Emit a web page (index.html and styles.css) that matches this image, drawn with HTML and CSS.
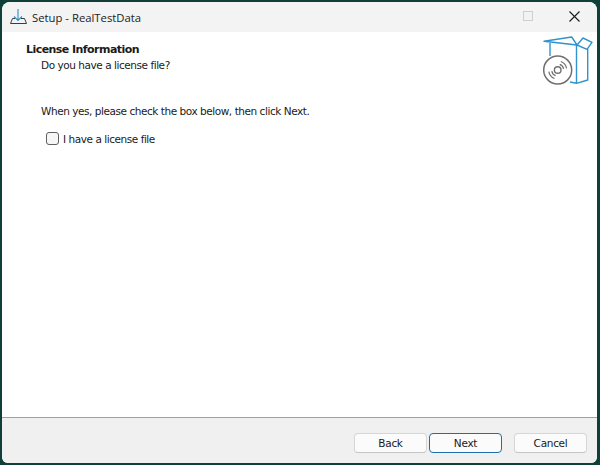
FILE: index.html
```html
<!DOCTYPE html>
<html lang="en">
<head>
<meta charset="utf-8">
<title>Setup - RealTestData</title>
<link rel="stylesheet" href="styles.css">
</head>
<body>
<div class="window">
  <header class="titlebar">
    <svg class="app-icon" width="17" height="16" viewBox="0 0 17 16" fill="none">
      <path d="M8 0v11.500M4 7.500l4 4 4-4" stroke="#2a8fc9" stroke-width="1.100"/>
      <path d="M5 9.500H2.500L.5 14.500H16.500L14.500 9.500H11" stroke="#3c3c3c" stroke-width="1"/>
    </svg>
    <span class="title">Setup - RealTestData</span>
    <div class="controls">
      <span class="maximize"></span>
      <svg class="close" width="11" height="11" viewBox="0 0 11 11"><path d="M.5.5l10 10M10.500.5l-10 10" stroke="#1a1a1a" stroke-width="1.100"/></svg>
    </div>
  </header>
  <main class="content">
    <section class="head">
      <div>
        <h1>License Information</h1>
        <p class="sub">Do you have a license file?</p>
      </div>
      <svg class="box-icon" width="50" height="50" viewBox="0 0 50 50" fill="none">
        <g stroke="#2f93cc" stroke-width="1.400" stroke-linejoin="round">
          <path d="M1 5.300L28.700 1L34 9Z"/>
          <path d="M34 9L40 2L49 6.300L44 13.300Z"/>
          <path d="M7 7V20"/>
          <path d="M33.500 9V47.300L27 46"/>
          <path d="M33.500 47.300L44.700 44V13"/>
        </g>
        <circle cx="14.700" cy="34" r="14" fill="#fff" stroke="#707070" stroke-width="1.500"/>
        <circle cx="14.700" cy="34" r="3.300" stroke="#707070" stroke-width="1.400"/>
        <g stroke="#707070" stroke-width="1.200">
          <path d="M16.750 28.360A6 6 0 0 1 20.600 32.960M17.800 25.500A9 9 0 0 1 23.560 32.440"/>
          <path d="M12.650 39.640A6 6 0 0 1 8.800 35.040M11.600 42.500A9 9 0 0 1 5.840 35.560"/>
        </g>
      </svg>
    </section>
    <p class="prompt">When yes, please check the box below, then click Next.</p>
    <label class="check"><span class="checkbox"></span><span class="check-label">I have a license file</span></label>
  </main>
  <footer class="footer">
    <button class="btn">Back</button>
    <button class="btn primary">Next</button>
    <button class="btn cancel">Cancel</button>
  </footer>
</div>
</body>
</html>
```
FILE: styles.css
```css
* { box-sizing: border-box; }
html, body { margin: 0; height: 100%; }
body {
  background: #0f3f38;
  padding: 2px 3px 2px 2px;
  overflow: hidden;
}
.window {
  height: 461px;
  display: flex;
  flex-direction: column;
  background: #fff;
  border-radius: 8px 8px 6px 6px;
  overflow: hidden;
  font-family: "DejaVu Sans", sans-serif;
  color: #1a1a1a;
}
.titlebar {
  height: 30px;
  flex: none;
  background: #f3f3f3;
  display: flex;
  align-items: center;
  padding-left: 8px;
}
.app-icon { flex: none; margin-right: 5px; }
.title { font: 11.3px "Open Sans", sans-serif; color: #222; }
.controls { margin-left: auto; display: flex; align-items: center; margin-top: -2px; }
.maximize {
  width: 10px; height: 10px;
  border: 1px solid #cfcfcf;
  margin-right: 36px;
}
.close { margin-right: 17px; }
.content { flex: 1; padding: 0 24px; }
.head { display: flex; justify-content: space-between; height: 65px; }
.head h1 { margin: 11px 0 0; font: 700 11px/13px "DejaVu Sans", sans-serif; letter-spacing: -0.55px; }
.sub { margin: 3px 0 0 15px; font: 10.5px/13px "DejaVu Sans", sans-serif; letter-spacing: -0.45px; }
.box-icon { margin: 4px -20px 0 0; flex: none; }
.prompt { margin: 8px 0 0 15px; font: 10.5px/13px "DejaVu Sans", sans-serif; letter-spacing: -0.45px; }
.check { display: flex; align-items: center; margin: 14px 0 0 20px; font: 10.5px/13px "DejaVu Sans", sans-serif; letter-spacing: -0.45px; }
.check-label { position: relative; top: 1px; }
.checkbox {
  width: 13px; height: 13px;
  background: #f6f6f6;
  border: 1px solid #5f5f5f;
  border-radius: 3px;
  margin-right: 4px;
}
.footer {
  height: 46px;
  flex: none;
  background: #f0f0f0;
  border-top: 1px solid #a0a0a0;
  display: flex;
  align-items: flex-start;
  padding: 15px 0 0 352px;
}
.btn {
  width: 73px; height: 20px;
  border: 1px solid #d6d6d6;
  border-bottom-color: #c4c4c4;
  border-radius: 4px;
  background: #fbfbfb;
  font: 10.5px "DejaVu Sans", sans-serif;
  letter-spacing: -0.3px;
  color: #1a1a1a;
  padding: 0;
}
.primary { margin-left: 2px; border-color: #1c6fa8; }
.cancel { margin-left: 12px; }
```
